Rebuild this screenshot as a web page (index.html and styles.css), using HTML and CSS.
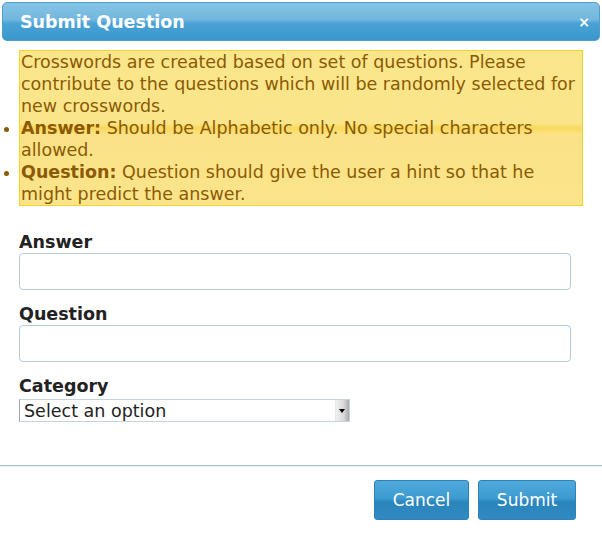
FILE: index.html
```html
<!DOCTYPE html>
<html>
<head>
<meta charset="utf-8">
<link rel="stylesheet" href="styles.css">
</head>
<body>
<div class="dialog">
  <div class="titlebar">
    <span class="title">Submit Question</span>
    <span class="close">×</span>
  </div>
  <div class="content">
    <div class="notice">
      <p>Crosswords are created based on set of questions. Please contribute to the questions which will be randomly selected for new crosswords.</p>
      <ul>
        <li><b>Answer:</b> Should be Alphabetic only. No special characters allowed.</li>
        <li><b>Question:</b> Question should give the user a hint so that he might predict the answer.</li>
      </ul>
    </div>
    <form class="form">
      <label class="label">Answer</label>
      <input class="field" type="text">
      <label class="label">Question</label>
      <input class="field" type="text">
      <label class="label label-cat">Category</label>
      <span class="select-wrap">
        <select class="select"><option>Select an option</option></select>
      </span>
    </form>
  </div>
  <div class="buttonpane">
    <button class="btn" type="button">Cancel</button>
    <button class="btn btn-submit" type="button">Submit</button>
  </div>
</div>
</body>
</html>
```
FILE: styles.css
```css
html, body {
  margin: 0;
  padding: 0;
  background: #fff;
}
body {
  font-family: "DejaVu Sans", Verdana, sans-serif;
  font-size: 17.5px;
}
.dialog {
  width: 602px;
  height: 535px;
  padding: 2px;
  box-sizing: border-box;
  display: flex;
  flex-direction: column;
}
.titlebar {
  height: 39px;
  box-sizing: border-box;
  width: 598px;
  border-radius: 5px;
  border: 1px solid #4c9fd0;
  background: linear-gradient(#86c4e6 0%, #72b6de 45%, #4aa2d5 55%, #3a97cd 100%);
  display: flex;
  align-items: center;
  justify-content: space-between;
  padding: 0 9px 0 17px;
}
.title {
  color: #fff;
  font-weight: bold;
  font-size: 17.5px;
  margin-top: 1px;
}
.close {
  color: #fff;
  font-weight: bold;
  font-size: 14px;
  margin-top: 0;
}
.content {
  padding: 9px 17px 0 17px;
}
.notice {
  width: 564px;
  box-sizing: border-box;
  background: linear-gradient(#fbe68b 0%, #fbe58a 47%, #f8d95a 50%, #fbe286 54%, #fbe48a 100%);
  border: 1px solid #f3d52a;
  color: #8c5a04;
  line-height: 22px;
  padding: 0 0 0 1px;
}
.notice p {
  margin: 0;
}
.notice ul {
  margin: 0;
  padding: 0;
  list-style: disc outside;
}
.form {
  display: flex;
  flex-direction: column;
  align-items: flex-start;
  padding-top: 26px;
}
.label {
  font-weight: bold;
  color: #222;
  line-height: 20px;
  margin-bottom: 1px;
}
.field {
  width: 552px;
  height: 37px;
  box-sizing: border-box;
  border: 1px solid #b4cbd9;
  border-radius: 4px;
  margin: 0 0 14px 0;
  font: inherit;
}
.label-cat {
  margin-bottom: 3px;
}
.select-wrap {
  position: relative;
  display: block;
  width: 331px;
  height: 23px;
}
.select {
  appearance: none;
  -webkit-appearance: none;
  width: 331px;
  height: 23px;
  box-sizing: border-box;
  border: 1px solid #c3d4de;
  border-left: 1px solid #9aa;
  background: #fff;
  font: inherit;
  color: #222;
  padding: 0 0 0 4px;
  border-radius: 0;
}
.select-wrap::after {
  content: "";
  position: absolute;
  right: 1px;
  top: 1px;
  width: 13px;
  height: 21px;
  background: linear-gradient(90deg, #f0f0f0, #d8d8d8 60%, #a9a9a9);
  border-left: 1px solid #e8e8e8;
}
.select-wrap::before {
  content: "";
  position: absolute;
  right: 5px;
  top: 10px;
  width: 0;
  height: 0;
  border-left: 3px solid transparent;
  border-right: 3px solid transparent;
  border-top: 4px solid #000;
  z-index: 1;
}
.buttonpane {
  margin-top: auto;
  border-top: 1px solid #a8c4d6;
  box-shadow: inset 0 1px 0 #e8f4fb;
  margin-left: -2px;
  margin-right: -2px;
  height: 70px;
  display: flex;
  justify-content: flex-end;
  gap: 9px;
  padding: 14px 26px 0 0;
  box-sizing: border-box;
  margin-bottom: -2px;
}
.btn {
  height: 40px;
  padding: 0 17px;
  font-family: "DejaVu Sans", Verdana, sans-serif;
  font-size: 17px;
  color: #fff;
  border: 1px solid #2a83bb;
  border-radius: 3px;
  background: linear-gradient(#50a9da 0%, #3d9bd1 45%, #2b85bd 55%, #2f8ac2 100%);
  width: 95px;
}
.btn-submit {
  width: 98px;
}
```
